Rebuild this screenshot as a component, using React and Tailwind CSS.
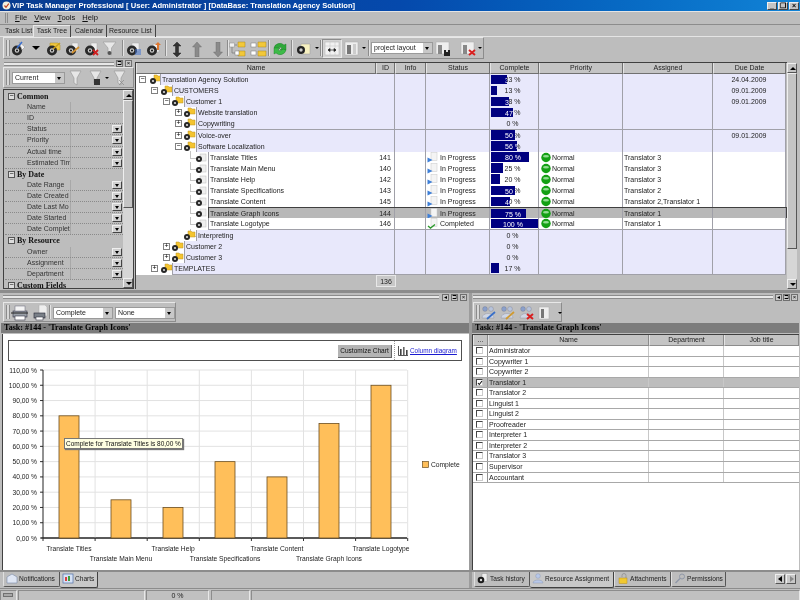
import React from "react";

const Node = ({ folder }) => (
  <svg width="14" height="11" viewBox="0 0 14 11" className="absolute left-0 top-0">
    {folder && <path d="M6 1h3l1 1h3v5H6z" fill="#f4c430" stroke="#b8902a" strokeWidth="0.5" />}
    {!folder && <rect x="6" y="2" width="6" height="7" fill="#efefef" stroke="#bbb" strokeWidth="0.5" />}
    <circle cx="5" cy="7" r="3" fill="#262626" />
    <circle cx="5" cy="7" r="1.1" fill="#ddd" />
  </svg>
);

const TB = ({ x, children }) => (
  <svg className="absolute top-[3px]" style={{ left: x }} width="18" height="16" viewBox="0 0 18 16">{children}</svg>
);
const B = () => (
  <g>
    <circle cx="7" cy="9.5" r="5" fill="#2a2a2a" />
    <circle cx="7" cy="9.5" r="2.2" fill="#ccc" />
    <circle cx="7" cy="9.5" r="1" fill="#111" />
  </g>
);
const Caret = ({ x, y }) => <div className="absolute w-0 h-0 border-l-[2px] border-r-[2px] border-t-[2px] border-l-transparent border-r-transparent border-t-black" style={{ left: x, top: y }} />;

const Arrow = ({ x, dir }) => (
  <svg className="absolute top-[4px]" style={{ left: x }} width="12" height="15" viewBox="0 0 12 15">
    {dir === "both" && <path d="M6 0l4 4H7.5v7H10l-4 4-4-4h2.5V4H2z" fill="#333" stroke="#111" strokeWidth="0.4" />}
    {dir === "up" && <path d="M6 0l4.5 5H8v10H4V5H1.5z" fill="#8a8a8a" stroke="#666" strokeWidth="0.4" />}
    {dir === "down" && <path d="M6 15l4.5-5H8V0H4v10H1.5z" fill="#8a8a8a" stroke="#666" strokeWidth="0.4" />}
  </svg>
);

const Sep = ({ x }) => <div className="absolute top-[2px] bottom-[2px] w-[2px] border-l border-l-[#8c8c8c] border-r border-r-[#e4e4e4]" style={{ left: x }} />;
const Grip = () => (
  <div className="absolute left-[2px] top-[2px] bottom-[2px] w-[4px] border-x border-x-[#8c8c8c] bg-[#d8d8d8]" />
);

const Pad = ({ children, cls }) => (
  <div className={"absolute border-t border-l border-t-[#e8e8e8] border-l-[#e8e8e8] border-r border-b border-r-[#8c8c8c] border-b-[#8c8c8c] bg-[#bfbfbf] " + cls}>{children}</div>
);

const WinBtn = ({ children, x }) => (
  <div className="absolute top-[2px] w-[10px] h-[8px] bg-[#c4c4c4] border border-[#efefef] border-r-[#444] border-b-[#444] text-[7px] leading-[6px] text-center font-bold text-black" style={{ left: x }}>{children}</div>
);

const PanelBtn = ({ x, y, t }) => (
  <div className="absolute w-[7px] h-[7px] border border-[#707070] bg-[#c8c8c8] text-[6px] leading-[5px] text-center text-black" style={{ left: x, top: y }}>{t}</div>
);

const Lines = ({ cls }) => (
  <div className={"absolute h-[4px] border-y border-y-[#8c8c8c] bg-[#e8e8e8] " + cls} />
);

const Combo = ({ cls, text }) => (
  <div className={"absolute h-[12px] bg-white border border-[#9a9a9a] text-[7px] leading-[10px] pl-[2px] text-[#222] whitespace-nowrap " + cls}>
    {text}
    <div className="absolute right-0 top-0 w-[9px] h-[10px] bg-[#c8c8c8]">
      <div className="absolute left-[2px] top-[4px] w-0 h-0 border-l-[2.5px] border-r-[2.5px] border-t-[3px] border-l-transparent border-r-transparent border-t-black" />
    </div>
  </div>
);

const columns = "grid-cols-[240px_19px_31px_64px_49px_84px_90px_73px]";

const rows = [
  { n: "Translation Agency Solution", l: 0, e: "-", p: 33, d: "24.04.2009" },
  { n: "CUSTOMERS", l: 1, e: "-", p: 13, d: "09.01.2009" },
  { n: "Customer 1", l: 2, e: "-", p: 38, d: "09.01.2009" },
  { n: "Website translation", l: 3, e: "+", p: 47 },
  { n: "Copywriting", l: 3, e: "+", p: 0 },
  { n: "Voice-over", l: 3, e: "+", p: 50, d: "09.01.2009" },
  { n: "Software Localization", l: 3, e: "-", p: 56 },
  { n: "Translate Titles", t: 1, id: 141, p: 80, a: "Translator 3" },
  { n: "Translate Main Menu", t: 1, id: 140, p: 25, a: "Translator 3" },
  { n: "Translate Help", t: 1, id: 142, p: 20, a: "Translator 3" },
  { n: "Translate Specifications", t: 1, id: 143, p: 50, a: "Translator 2" },
  { n: "Translate Content", t: 1, id: 145, p: 40, a: "Translator 2,Translator 1" },
  { n: "Translate Graph Icons", t: 1, id: 144, p: 75, a: "Translator 1", sel: 1 },
  { n: "Translate Logotype", t: 1, id: 146, p: 100, a: "Translator 1", done: 1 },
  { n: "Interpreting", l: 3, p: 0 },
  { n: "Customer 2", l: 2, e: "+", p: 0 },
  { n: "Customer 3", l: 2, e: "+", p: 0 },
  { n: "TEMPLATES", l: 1, e: "+", p: 17 },
];

const boxX = [3, 15, 27, 39];
const nodeX = [12, 23, 34, 46];
const labelX = [24, 36, 48, 60];

const Cell = ({ children, cls = "" }) => (
  <div className={"relative border-r border-r-[#a0a0a8] text-[7px] leading-[11px] px-[1px] whitespace-nowrap overflow-hidden text-[#222] " + cls}>{children}</div>
);

const TreeRow = ({ r }) => {
  const lx = r.t ? 72 : labelX[r.l];
  const bg = r.sel ? "bg-[#b8b8b8]" : r.t ? "bg-white" : "bg-[#e8e8fb]";
  return (
    <div className={"relative h-[11.11px] grid " + columns}>
      <div className="relative bg-white">
        {(r.t || r.n === "Interpreting") && (
          <>
            <div className="absolute left-[54px] top-[-1px] h-[7px] border-l border-l-[#c4c4c4]" />
            <div className="absolute left-[54px] top-[6px] w-[6px] border-t border-t-[#c4c4c4]" />
          </>
        )}
        {!r.t && r.e && (
          <div className="absolute top-[2px] w-[7px] h-[7px] border border-[#808080] bg-white text-[7px] leading-[4px] text-center text-black" style={{ left: boxX[r.l] }}>{r.e === "-" ? "−" : "+"}</div>
        )}
        <div className="absolute top-0 w-[14px] h-[11px]" style={{ left: r.t ? 58 : nodeX[r.l] }}>
          <Node folder={!r.t} />
        </div>
        <div className={"absolute top-0 bottom-0 right-0 border-l border-b text-[7px] leading-[11px] pl-[1px] whitespace-nowrap text-[#222] " + bg + (r.sel ? " border-[#404040] border-t" : " border-[#a0a0a8]")} style={{ left: lx }}>{r.n}</div>
      </div>
      {[
        <Cell key="id" cls="text-center">{r.id}</Cell>,
        <Cell key="in" />,
        <Cell key="st">
          {r.t && (
            <>
              <svg className="absolute left-[1px] top-0" width="12" height="11" viewBox="0 0 12 11">
                <rect x="4" y="0.5" width="6" height="8" fill="#f4f4f4" stroke="#c8c8c8" strokeWidth="0.5" />
                {r.done ? (
                  <path d="M1 8l2.5 2L8 6.5" fill="none" stroke="#2d9a2d" strokeWidth="1.4" />
                ) : (
                  <path d="M0.5 5.5v5l5-2.5z" fill="#3d7fd8" />
                )}
              </svg>
              <span className="absolute left-[14px]">{r.done ? "Completed" : "In Progress"}</span>
            </>
          )}
        </Cell>,
        <Cell key="pc" cls="text-center">
          <span className="pr-[3px]">{r.p} %</span>
          <div className="absolute left-[1px] top-[0.5px] bottom-[1px] bg-[#000080] overflow-hidden" style={{ width: (r.p / 100) * 47 }}>
            <span className="absolute left-0 w-[47px] text-center text-white pr-[3px]">{r.p} %</span>
          </div>
        </Cell>,
        <Cell key="pr">
          {r.t && (
            <>
              <svg className="absolute left-[2px] top-0" width="10" height="11" viewBox="0 0 10 11">
                <circle cx="5" cy="5.5" r="4.7" fill="#14a014" />
                <ellipse cx="5" cy="4.2" rx="3" ry="1.2" fill="#a8e8a8" opacity="0.85" />
              </svg>
              <span className="absolute left-[13px]">Normal</span>
            </>
          )}
        </Cell>,
        <Cell key="as">{r.a}</Cell>,
        <Cell key="du" cls="text-center">{r.d}</Cell>,
      ].map((c, i) => (
        <div key={i} className={"grid border-b " + bg + (r.sel ? " border-y border-[#404040]" : " border-b-[#a0a0a8]")}>{c}</div>
      ))}
      {r.sel && <div className="absolute right-0 top-0 bottom-0 border-r border-r-[#404040]" />}
    </div>
  );
};

const props = [
  ["h", "Common"], ["Name", 0], ["ID", 0], ["Status", 1], ["Priority", 1], ["Actual time", 1], ["Estimated Tim", 1],
  ["h", "By Date"], ["Date Range", 1], ["Date Created", 1], ["Date Last Mo", 1], ["Date Started", 1], ["Date Complet", 1],
  ["h", "By Resource"], ["Owner", 1], ["Assignment", 1], ["Department", 1], ["h", "Custom Fields"],
];

const PropRow = ({ p }) =>
  p[0] === "h" ? (
    <div className="relative h-[11.12px] bg-[#bdbdbd]">
      <div className="absolute left-[3px] top-[2px] w-[7px] h-[7px] border border-[#555] bg-[#ddd] text-[7px] leading-[4px] text-center text-black">−</div>
      <span className="absolute left-[12px] top-0 text-[8px] leading-[11px] font-bold text-[#111] [font-family:Liberation_Serif,serif] whitespace-nowrap">{p[1]}</span>
    </div>
  ) : (
    <div className="relative h-[11.12px] bg-[#bdbdbd] border-b border-dotted border-b-[#8a8a8a]">
      <span className="absolute left-[22px] top-0 w-[45px] text-[7px] leading-[10px] text-[#333] whitespace-nowrap">{p[0]}</span>
      <div className="absolute left-[65px] top-0 bottom-0 border-l border-l-[#a8a8a8] bg-[#bdbdbd] w-[41px]" />
      {p[1] === 1 && (
        <div className="absolute left-[107px] top-[1px] w-[10px] h-[8px] bg-[#d0d0d0] border border-[#efefef] border-r-[#444] border-b-[#444]">
          <div className="absolute left-[1.5px] top-[2px] w-0 h-0 border-l-[2.5px] border-r-[2.5px] border-t-[3px] border-l-transparent border-r-transparent border-t-black" />
        </div>
      )}
    </div>
  );

const people = ["Administrator", "Copywriter 1", "Copywriter 2", "Translator 1", "Translator 2", "Linguist 1", "Linguist 2", "Proofreader", "Interpreter 1", "Interpreter 2", "Translator 3", "Supervisor", "Accountant"];

const Scroll = ({ cls, thumb }) => (
  <div className={"absolute bg-[#d6d6d6] " + cls}>
    <div className="absolute left-0 right-0 top-0 h-[10px] bg-[#c4c4c4] border border-[#efefef] border-r-[#555] border-b-[#555]">
      <div className="absolute left-[1.5px] top-[3px] w-0 h-0 border-l-[3px] border-r-[3px] border-b-[3px] border-l-transparent border-r-transparent border-b-black" />
    </div>
    <div className={"absolute left-0 right-0 top-[10px] bg-[#c4c4c4] border border-[#efefef] border-r-[#555] border-b-[#555] " + thumb} />
    <div className="absolute left-0 right-0 bottom-0 h-[10px] bg-[#c4c4c4] border border-[#efefef] border-r-[#555] border-b-[#555]">
      <div className="absolute left-[1.5px] top-[3px] w-0 h-0 border-l-[3px] border-r-[3px] border-t-[3px] border-l-transparent border-r-transparent border-t-black" />
    </div>
  </div>
);

const TabIcon = ({ kind }) => (
  <svg width="12" height="11" viewBox="0 0 12 11" className="absolute left-[2px] top-[1px]">
    {kind === "mail" && <path d="M1 4l5-3 5 3v6H1z" fill="#dfe6f4" stroke="#7a8aa8" strokeWidth="0.6" />}
    {kind === "chart" && (<g><rect x="1" y="1" width="10" height="9" fill="#d6e2f6" stroke="#5070a8" strokeWidth="0.7" /><rect x="3" y="4" width="2" height="4" fill="#d84040" /><rect x="6" y="3" width="2" height="5" fill="#40a040" /></g>)}
    {kind === "hist" && (<g><rect x="5" y="0.5" width="5" height="8" fill="#eee" stroke="#999" strokeWidth="0.5" /><circle cx="4" cy="7" r="3.3" fill="#1a1a1a" /><circle cx="4" cy="7" r="1.2" fill="#ddd" /></g>)}
    {kind === "res" && (<g><circle cx="6" cy="3" r="2.3" fill="#b8c8e8" stroke="#8090b0" strokeWidth="0.4" /><path d="M1 10c0-4 10-4 10 0z" fill="#b8c8e8" stroke="#8090b0" strokeWidth="0.4" /></g>)}
    {kind === "att" && (<g><path d="M5 4V2.5a2 2 0 014 0V5" fill="none" stroke="#999" /><rect x="2" y="5" width="8" height="5.5" fill="#f0c830" stroke="#b89020" strokeWidth="0.5" /></g>)}
    {kind === "perm" && (<g><circle cx="8" cy="3.5" r="2.5" fill="none" stroke="#9098a8" /><path d="M6 5.5L1.5 10" stroke="#9098a8" strokeWidth="1.4" /></g>)}
  </svg>
);

const BottomTab = ({ cls, icon, text, active }) => (
  <div className={"absolute top-[572px] h-[15px] rounded-b-[2px] text-[6.6px] leading-[14px] text-[#222] whitespace-nowrap " + (active ? "bg-[#c8c8c8] h-[16px] border-r border-b border-r-[#404040] border-b-[#404040] " : "border-r border-b border-r-[#555] border-b-[#555] border-l border-l-[#e0e0e0] ") + cls}>
    <TabIcon kind={icon} />
    <span className="absolute left-[15px]">{text}</span>
  </div>
);

const bars = [80, 25, 20, 50, 40, 75, 100];
const chartNames = ["Translate Titles", "Translate Main Menu", "Translate Help", "Translate Specifications", "Translate Content", "Translate Graph Icons", "Translate Logotype"];

const Chart = () => {
  const y0 = 538;
  const unit = 168 / 110;
  return (
    <svg className="absolute left-0 top-0" width="800" height="600" viewBox="0 0 800 600" fontFamily="'Liberation Sans',sans-serif" fontSize="6.7" fill="#222">
      {Array.from({ length: 12 }, (_, i) => {
        const y = y0 - (i * 10 * unit);
        return (
          <g key={i}>
            <line x1="41" x2="407" y1={y} y2={y} stroke={i === 0 ? "#222" : "#e2e2e2"} />
            <line x1="40" x2="43" y1={y} y2={y} stroke="#333" />
            <text x="37" y={y + 2.5} textAnchor="end">{(i * 10).toFixed(2).replace(".", ",")} %</text>
          </g>
        );
      })}
      {Array.from({ length: 8 }, (_, i) => {
        const x = 43 + i * 52.1;
        return (
          <g key={i}>
            <line x1={x} x2={x} y1="370" y2={y0} stroke={i === 0 ? "#222" : "#e2e2e2"} />
            <line x1={x} x2={x} y1={y0} y2={y0 + 3} stroke="#333" />
          </g>
        );
      })}
      <line x1="43" x2="407" y1={y0} y2={y0} stroke="#222" />
      {bars.map((v, i) => {
        const x = 59 + i * 52;
        const h = v * unit;
        return <rect key={i} x={x} y={y0 - h} width="20" height={h} fill="#ffbf5a" stroke="#6b4e20" strokeWidth="0.8" />;
      })}
      {chartNames.map((n, i) => (
        <text key={n} x={69 + i * 52} y={i % 2 ? 561 : 551} textAnchor="middle">{n}</text>
      ))}
      <rect x="422.5" y="461.5" width="6" height="6" fill="#ffbf5a" stroke="#6b4e20" strokeWidth="0.7" />
      <text x="431" y="467">Complete</text>
    </svg>
  );
};

export default function App() {
  return (
    <div className="relative w-[800px] h-[600px] overflow-hidden bg-[#bdbdbd] [font-family:Liberation_Sans,sans-serif] text-[#222] blur-[0.3px]">
      {/* title bar */}
      <div className="absolute left-0 top-0 w-[800px] h-[11px] bg-gradient-to-r from-[#083c90] via-[#0549ac] to-[#1183d6]">
        <svg className="absolute left-[2px] top-[1px]" width="9" height="9" viewBox="0 0 9 9">
          <circle cx="4.5" cy="4.5" r="4" fill="#f3f0e0" />
          <path d="M2.5 4.5l1.5 1.8L6.8 2.6" stroke="#c04020" fill="none" strokeWidth="1.2" />
        </svg>
        <div className="absolute left-[12px] top-0 text-[7.6px] leading-[11px] font-bold text-white whitespace-nowrap">VIP Task Manager Professional [ User: Administrator ] [DataBase: Translation Agency Solution]</div>
        <WinBtn x={767}>_</WinBtn>
        <WinBtn x={778}>❐</WinBtn>
        <WinBtn x={789}>×</WinBtn>
      </div>

      {/* menu */}
      <div className="absolute left-0 top-[11px] w-[800px] h-[14px] border-t border-t-[#e4e4e4] border-b border-b-[#8c8c8c]">
        <div className="absolute left-[5px] top-[1px] h-[10px] w-[3px] border-x border-x-[#8c8c8c]" />
        <div className="absolute left-[15px] top-0 flex gap-[7px] text-[7.6px] leading-[12px] text-[#111]">
          <span><u>F</u>ile</span><span><u>V</u>iew</span><span><u>T</u>ools</span><span><u>H</u>elp</span>
        </div>
      </div>

      {/* tabs */}
      <div className="absolute left-0 top-[25px] w-[800px] h-[12px] border-b border-b-[#e4e4e4] text-[7px] leading-[12px] text-[#222]">
        <span className="absolute left-[5px]">Task List</span>
        <div className="absolute left-[33px] top-0 w-[38px] h-[12px] border-l border-t border-[#e8e8e8] border-r-[#444] border-r bg-[#c4c4c4] text-center leading-[10px]">Task Tree</div>
        <span className="absolute left-[75px] pr-[3px] border-r border-r-[#444]">Calendar</span>
        <span className="absolute left-[109px] pr-[3px] border-r border-r-[#444]">Resource List</span>
      </div>

      {/* main toolbar */}
      <Pad cls="left-[3px] top-[37px] w-[481px] h-[22px]">
        <Grip />
        <TB x={6}><B /><path d="M9 1l6 5-3 3z" fill="#f6f6f6" stroke="#888" strokeWidth="0.5" /><path d="M7 7L12 1" stroke="#3a6fd0" strokeWidth="1.5" /></TB>
        <div className="absolute left-[28px] top-[8px] w-0 h-0 border-l-[4px] border-r-[4px] border-t-[4px] border-l-transparent border-r-transparent border-t-black" />
        <TB x={41}><path d="M5 2h8l2 2v5H5z" fill="#f0c840" stroke="#a88a20" strokeWidth="0.5" /><B /><path d="M8 8L15 2" stroke="#c8a020" strokeWidth="1.6" /></TB>
        <TB x={60}><path d="M8 2h6v8H8z" fill="#eee" stroke="#aaa" strokeWidth="0.5" /><B /><path d="M8 12L15 6" stroke="#d09030" strokeWidth="1.8" /></TB>
        <TB x={79}><path d="M8 2h6v8H8z" fill="#eee" stroke="#aaa" strokeWidth="0.5" /><B /><path d="M10 9l5 5m0-5l-5 5" stroke="#d02020" strokeWidth="1.8" /></TB>
        <TB x={98}><path d="M1 1h13L9.5 7v7L6 12V7z" fill="#e8e8e8" stroke="#a0a0a0" strokeWidth="0.7" /><circle cx="7.5" cy="12" r="2" fill="#555" /></TB>
        <Sep x={118} />
        <TB x={121}><path d="M7 2h7v8H7z" fill="#eee" stroke="#aaa" strokeWidth="0.5" /><B /><path d="M10 9h6M10 11h6M10 13h6" stroke="#3a6fd0" strokeWidth="1" /></TB>
        <TB x={141}><path d="M8 3h6v8H8z" fill="#eee" stroke="#aaa" strokeWidth="0.5" /><B /><path d="M13 1l3 3h-2v5h-2V4h-2z" fill="#e07830" /></TB>
        <Sep x={161} />
        <Arrow x={167} dir="both" />
        <Arrow x={187} dir="up" />
        <Arrow x={208} dir="down" />
        <Sep x={223} />
        <TB x={225}>
          <path d="M3 4v8h6M3 4h5" stroke="#777" fill="none" strokeWidth="0.7" />
          <rect x="0.5" y="2" width="5" height="4" fill="#f0f0f0" stroke="#888" strokeWidth="0.5" />
          <path d="M9 1h7v5H9zM9 10h7v5H9z" fill="#f2c838" stroke="#a88a20" strokeWidth="0.5" />
          <rect x="6" y="10" width="4" height="4" fill="#fff" stroke="#777" strokeWidth="0.5" />
        </TB>
        <TB x={246}>
          <rect x="1" y="2" width="5" height="4" fill="#fff" stroke="#777" strokeWidth="0.5" />
          <rect x="1" y="10" width="5" height="4" fill="#fff" stroke="#777" strokeWidth="0.5" />
          <path d="M8 1h8v5H8zM8 10h8v5H8z" fill="#f2c838" stroke="#a88a20" strokeWidth="0.5" />
        </TB>
        <Sep x={264} />
        <TB x={267}>
          <path d="M3 7a6 6 0 0110-3l2-1v6h-6l2-2a3.5 3.5 0 00-5 1z" fill="#2fa83a" stroke="#177a20" strokeWidth="0.4" />
          <path d="M15 9a6 6 0 01-10 3l-2 1V7h6l-2 2a3.5 3.5 0 005-1z" fill="#3dbb48" stroke="#177a20" strokeWidth="0.4" />
        </TB>
        <Sep x={287} />
        <TB x={291}><path d="M6 3h9v10H6z" fill="#f6f0c0" stroke="#999" strokeWidth="0.5" /><circle cx="6" cy="9" r="4" fill="#222" /><circle cx="6" cy="9" r="1.7" fill="#ccc" /></TB>
        <Caret x={311} y={9} />
        <Sep x={316} />
        <div className="absolute left-[318px] top-[1px] w-[20px] h-[19px] bg-[#d4d4d4] border border-[#8c8c8c] border-r-[#e8e8e8] border-b-[#e8e8e8]">
          <svg width="18" height="17" viewBox="0 0 18 17">
            <rect x="2" y="2" width="14" height="13" fill="#f2f2f2" stroke="#b0b0b0" strokeWidth="0.5" />
            <path d="M2 6h14M7 2v13M12 2v13" stroke="#c0c0c0" strokeWidth="0.5" />
            <path d="M5 10h8M5 10l2-1.5v3zM13 10l-2-1.5v3z" stroke="#222" strokeWidth="0.7" fill="#222" />
          </svg>
        </div>
        <svg className="absolute left-[340px] top-[3px]" width="18" height="16" viewBox="0 0 18 16">
          <rect x="1" y="1" width="13" height="13" fill="#eee" stroke="#aaa" strokeWidth="0.5" />
          <rect x="3" y="4" width="4" height="9" fill="#777" />
          <rect x="9" y="3" width="3" height="10" fill="#ccc" />
        </svg>
        <Caret x={358} y={9} />
        <Sep x={364} />
        <Combo cls="left-[367px] top-[4px] w-[62px]" text="project layout" />
        <svg className="absolute left-[431px] top-[3px]" width="18" height="16" viewBox="0 0 18 16">
          <rect x="1" y="1" width="13" height="12" fill="#eee" stroke="#aaa" strokeWidth="0.5" />
          <rect x="3" y="4" width="4" height="9" fill="#888" />
          <path d="M9 9h6v6H9z" fill="#222" /><rect x="11" y="9" width="2" height="2" fill="#ddd" />
        </svg>
        <svg className="absolute left-[456px] top-[3px]" width="18" height="16" viewBox="0 0 18 16">
          <rect x="1" y="1" width="13" height="12" fill="#eee" stroke="#aaa" strokeWidth="0.5" />
          <rect x="3" y="4" width="4" height="9" fill="#888" />
          <path d="M9 9l6 5m0-5l-6 5" stroke="#d82020" strokeWidth="2" />
        </svg>
        <Caret x={474} y={9} />
      </Pad>

      {/* left panel */}
      <Lines cls="left-[4px] top-[62px] w-[110px]" />
      <PanelBtn x={116} y={60} t="⊐" />
      <PanelBtn x={125} y={60} t="×" />
      <Pad cls="left-[3px] top-[67px] w-[131px] h-[21px]">
        <Grip />
        <Combo cls="left-[8px] top-[4px] w-[53px]" text="Current" />
        <svg className="absolute left-[65px] top-[2px]" width="60" height="17" viewBox="0 0 60 17" fill="#e6e6e6" stroke="#9c9c9c" strokeWidth="0.7">
          <path d="M1 1h11L8 8v7l-3-2V8z" />
          <path d="M21 1h11l-4 7v7l-3-2V8z" />
          <rect x="25" y="9" width="6" height="6" fill="#333" stroke="none" />
          <path d="M45 1h11l-4 7v7l-3-2V8z" />
          <path d="M50 10l5 5m0-5l-5 5" stroke="#888" />
        </svg>
        <Caret x={101} y={9} />
      </Pad>
      <div className="absolute left-[3px] top-[89px] w-[131px] h-[200px] border border-[#404040] overflow-hidden bg-[#bdbdbd]">
        <div className="absolute left-[1px] top-[1px] w-[118px]">
          {props.map((p, i) => <PropRow key={i} p={p} />)}
        </div>
        <Scroll cls="right-0 top-0 bottom-0 w-[10px]" thumb="h-[108px]" />
      </div>

      {/* tree grid */}
      <div className="absolute left-[135px] top-[62px] w-[652px] h-[227px] border-t border-l border-t-[#404040] border-l-[#404040] bg-[#bdbdbd] overflow-hidden">
        <div className={"grid h-[11px] text-[7px] leading-[10px] text-center text-[#222] " + columns}>
          {["Name", "ID", "Info", "Status", "Complete", "Priority", "Assigned", "Due Date"].map((h) => (
            <div key={h} className="border-r border-b border-r-[#707070] border-b-[#707070] border-l border-l-[#e4e4e4] bg-[#c4c4c4]">{h}</div>
          ))}
        </div>
        {rows.map((r) => <TreeRow key={r.n} r={r} />)}
        <div className="absolute left-[240px] top-[212px] w-[20px] h-[12px] border border-[#e8e8e8] text-[7px] leading-[11px] text-center bg-[#c8c8c8]">136</div>
      </div>
      <Scroll cls="left-[787px] top-[63px] w-[10px] h-[226px]" thumb="h-[176px]" />

      {/* splitter */}
      <div className="absolute left-0 top-[290px] w-[800px] h-[3px] bg-[#8c8c8c]" />
      <Lines cls="left-[3px] top-[295px] w-[436px]" />
      <PanelBtn x={442} y={294} t="◂" />
      <PanelBtn x={451} y={294} t="⊐" />
      <PanelBtn x={460} y={294} t="×" />
      <Lines cls="left-[473px] top-[295px] w-[300px]" />
      <PanelBtn x={775} y={294} t="◂" />
      <PanelBtn x={783} y={294} t="⊐" />
      <PanelBtn x={791} y={294} t="×" />
      <div className="absolute left-[469px] top-[293px] w-[3px] h-[295px] bg-[#9c9c9c]" />

      {/* left bottom toolbar */}
      <Pad cls="left-[3px] top-[302px] w-[173px] h-[20px]">
        <Grip />
        <svg className="absolute left-[6px] top-[2px]" width="40" height="16" viewBox="0 0 40 16">
          <rect x="3" y="6" width="14" height="6" fill="#9aa0a8" stroke="#334" strokeWidth="0.6" />
          <rect x="5" y="1" width="10" height="5" fill="#f4f4f4" stroke="#667" strokeWidth="0.5" />
          <rect x="5" y="11" width="10" height="4" fill="#fff" stroke="#334" strokeWidth="0.6" />
          <path d="M1 8h17" stroke="#222" />
          <path d="M29 0h6l2 2v9h-8z" fill="#eee" stroke="#aaa" strokeWidth="0.5" />
          <rect x="24" y="8" width="11" height="5" fill="#7a8088" stroke="#223" strokeWidth="0.6" />
          <rect x="26" y="12" width="7" height="3" fill="#fff" stroke="#223" strokeWidth="0.5" />
        </svg>
        <Sep x={45} />
        <Combo cls="left-[49px] top-[4px] w-[60px]" text="Complete" />
        <Combo cls="left-[111px] top-[4px] w-[60px]" text="None" />
      </Pad>
      <div className="absolute left-[1px] top-[323px] w-[468px] h-[10px] bg-[#7c7c7c] text-[8.1px] leading-[10px] pl-[3px] font-bold text-black [font-family:Liberation_Serif,serif]">Task: #144 - 'Translate Graph Icons'</div>

      {/* chart panel */}
      <div className="absolute left-[2px] top-[334px] w-[467px] h-[236px] bg-white border-l border-l-[#404040]" />
      <Chart />
      <div className="absolute left-[8px] top-[340px] w-[454px] h-[21px] border border-[#505050] bg-white">
        <div className="absolute left-[329px] top-[4px] w-[54px] h-[13px] bg-[#b4b4b4] border-b border-r border-b-[#666] border-r-[#666] text-[6.5px] leading-[12px] text-center text-[#111] whitespace-nowrap">Customize Chart</div>
        <div className="absolute left-[385px] top-0 bottom-0 border-l border-dotted border-l-[#999]" />
        <svg className="absolute left-[389px] top-[5px]" width="10" height="10" viewBox="0 0 10 10">
          <path d="M0.5 0v9.5H10" stroke="#555" fill="none" />
          <rect x="2" y="3" width="1.6" height="6" fill="#444" />
          <rect x="5" y="1" width="1.6" height="8" fill="#666" />
          <rect x="8" y="4" width="1.6" height="5" fill="#444" />
        </svg>
        <span className="absolute left-[401px] top-[4px] text-[6.4px] leading-[11px] text-[#1a1ad0] underline whitespace-nowrap">Column diagram</span>
      </div>
      <div className="absolute left-[64px] top-[438px] w-[119px] h-[11px] bg-[#ffffe1] border border-[#777] shadow-[1px_1px_1px_#777] text-[6.5px] leading-[9px] pl-[1px] whitespace-nowrap text-[#111]">Complete for Translate Titles is 80,00 %</div>

      {/* right bottom */}
      <Pad cls="left-[473px] top-[302px] w-[89px] h-[20px]">
        <Grip />
        <svg className="absolute left-[7px] top-[2px]" width="70" height="16" viewBox="0 0 70 16">
          {[0, 19, 38].map((x) => (
            <g key={x} transform={`translate(${x} 0)`}>
              <circle cx="4" cy="4" r="2.4" fill="#8aa0cc" stroke="#667" strokeWidth="0.3" />
              <circle cx="10" cy="4" r="2.4" fill="#b8c4dc" stroke="#667" strokeWidth="0.3" />
              <path d="M1 13c0-6 12-6 12 0z" fill="#cfd6e4" stroke="#889" strokeWidth="0.4" />
            </g>
          ))}
          <path d="M6 14l8-7" stroke="#3a70c8" strokeWidth="1.8" />
          <path d="M25 14l8-7" stroke="#d09a30" strokeWidth="1.8" />
          <path d="M46 9l6 5m0-5l-6 5" stroke="#d82020" strokeWidth="2" />
          <rect x="58" y="2" width="10" height="12" fill="#eee" stroke="#aaa" strokeWidth="0.5" />
          <rect x="60" y="4" width="3" height="9" fill="#777" />
        </svg>
        <Caret x={84} y={9} />
      </Pad>
      <div className="absolute left-[472px] top-[323px] w-[327px] h-[10px] bg-[#7c7c7c] text-[8.1px] leading-[10px] pl-[3px] font-bold text-black [font-family:Liberation_Serif,serif]">Task: #144 - 'Translate Graph Icons'</div>
      <div className="absolute left-[472px] top-[334px] w-[327px] h-[236px] bg-white border-l border-t border-l-[#404040] border-t-[#404040]">
        <div className="grid grid-cols-[15px_161px_75px_75px] h-[11px] text-[7px] leading-[10px] text-center text-[#222]">
          {["...", "Name", "Department", "Job title"].map((h) => (
            <div key={h} className="bg-[#c4c4c4] border-r border-b border-r-[#8c8c8c] border-b-[#8c8c8c] border-l border-l-[#e4e4e4]">{h}</div>
          ))}
        </div>
        {people.map((p) => {
          const sel = p === "Translator 1";
          return (
            <div key={p} className={"grid grid-cols-[15px_161px_75px_75px] h-[10.55px] text-[7px] leading-[9px] border-b border-b-[#a8a8a8] text-[#222] " + (sel ? "bg-[#bdbdbd]" : "bg-white")}>
              <div className="relative border-r border-r-[#909090]">
                <div className="absolute left-[3px] top-[1px] w-[7px] h-[7px] border-t border-l border-t-[#444] border-l-[#444] border-r border-b border-r-[#ccc] border-b-[#ccc] bg-white">
                  {sel && <svg className="absolute left-0 top-0" width="6" height="6" viewBox="0 0 6 6"><path d="M1 3l1.3 1.5L5 1" stroke="#111" fill="none" strokeWidth="1.1" /></svg>}
                </div>
              </div>
              <div className="border-r border-r-[#c8c8c8] pl-[1px] whitespace-nowrap">{p}</div>
              <div className="border-r border-r-[#c8c8c8]" />
              <div />
            </div>
          );
        })}
      </div>

      {/* bottom tabs */}
      <div className="absolute left-0 top-[570px] w-[800px] h-[2px] bg-[#8c8c8c]" />
      <BottomTab cls="left-[3px] w-[57px] bg-[#bdbdbd]" icon="mail" text="Notifications" />
      <BottomTab cls="left-[60px] w-[38px]" icon="chart" text="Charts" active />
      <BottomTab cls="left-[474px] w-[56px]" icon="hist" text="Task history" />
      <BottomTab cls="left-[530px] w-[84px]" icon="res" text="Resource Assignment" active />
      <BottomTab cls="left-[614px] w-[57px]" icon="att" text="Attachments" />
      <BottomTab cls="left-[671px] w-[55px]" icon="perm" text="Permissions" />
      <div className="absolute left-[775px] top-[574px] w-[10px] h-[10px] bg-[#c8c8c8] border border-[#efefef] border-r-[#555] border-b-[#555]">
        <div className="absolute left-[2px] top-[1px] w-0 h-0 border-y-[3px] border-r-[4px] border-y-transparent border-r-black" />
      </div>
      <div className="absolute left-[786px] top-[574px] w-[10px] h-[10px] bg-[#c8c8c8] border border-[#efefef] border-r-[#555] border-b-[#555]">
        <div className="absolute left-[3px] top-[1px] w-0 h-0 border-y-[3px] border-l-[4px] border-y-transparent border-l-[#888]" />
      </div>

      {/* status bar */}
      <div className="absolute left-0 top-[588px] w-[800px] h-[12px] border-t border-t-[#8c8c8c] bg-[#c0c0c0]">
        {[["left-0 w-[17px]", ""], ["left-[18px] w-[127px]", ""], ["left-[146px] w-[63px]", "0 %"], ["left-[211px] w-[39px]", ""], ["left-[251px] w-[549px]", ""]].map(([c, t], i) => (
          <div key={i} className={"absolute top-[1px] h-[10px] border-t border-l border-t-[#8c8c8c] border-l-[#8c8c8c] border-r border-r-[#e8e8e8] text-[7px] leading-[9px] text-center text-[#222] " + c}>{t}</div>
        ))}
        <div className="absolute left-[3px] top-[4px] w-[10px] h-[4px] bg-[#a8a8a8] border border-[#707070]" />
      </div>
    </div>
  );
}
